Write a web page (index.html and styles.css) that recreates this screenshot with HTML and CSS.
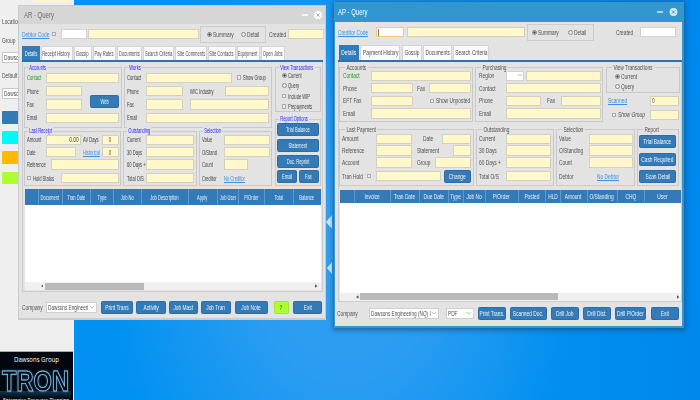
FILE: index.html
```html
<!DOCTYPE html>
<html lang="en">
<head>
<meta charset="utf-8">
<title>Accounts Query</title>
<link rel="stylesheet" href="styles.css">
</head>
<body>
<div class="desktop">
  <svg class="rays" viewBox="0 0 700 400"><path d="M326 222l6-7v14zM327 268l5-6v12z"/></svg>
  <aside class="side">
    <div class="side-top"></div>
    <div class="side-label loc"><b>Location</b></div>
    <div class="side-label grp"><b>Group</b></div>
    <div class="side-box"><b>Dawsons</b></div>
    <div class="side-label def"><b>Default</b></div>
    <div class="side-box"><b>Dawsons</b></div>
    <div class="side-btns"><i class="blue"></i><i class="cyan"></i><i class="orange"></i><i class="lime"></i></div>
    <div class="tron">
      <svg viewBox="0 0 73 49" width="73" height="49">
        <defs><linearGradient id="fade" x1="0" y1="0" x2="0" y2="1"><stop offset="0" stop-color="#2f7fae"/><stop offset="1" stop-color="#02060e"/></linearGradient></defs>
        <rect x="0" y="39" width="71" height="8" fill="url(#fade)" opacity=".4"/>
        <text x="14" y="10" class="tron-name" textLength="45" lengthAdjust="spacingAndGlyphs">Dawsons Group</text>
        <text x="2" y="38.5" class="tron-logo" textLength="67" lengthAdjust="spacingAndGlyphs">TRON</text>
        <text x="3" y="50" class="tron-sub" textLength="66" lengthAdjust="spacingAndGlyphs">Enterprise Resource Planning</text>
      </svg>
    </div>
  </aside>

  <section class="win ar">
    <header class="title"><b>AR - Query</b>
      <svg class="ctl" viewBox="0 0 24 12"><path d="M3 6h6" stroke="#fff" stroke-width="1.6"/><circle cx="19" cy="6" r="3.9" fill="#fff"/><path d="M17.4 4.4l3.2 3.2M20.6 4.4l-3.2 3.2" stroke="#aaa"/></svg>
    </header>
    <div class="top">
      <div class="lab link w30"><b>Debtor Code</b></div><i class="chk"></i>
      <i class="f white w26 m3"></i><i class="f w110 m1"></i>
      <div class="frame"><i class="rad on"></i><div class="lab w28"><b>Summary</b></div><i class="rad"></i><div class="lab"><b>Detail</b></div></div>
      <div class="lab w19 m3"><b>Created</b></div><i class="f w36"></i>
    </div>
    <nav class="tabs">
      <div class="tab on"><b>Details</b></div><div class="tab"><b>Receipt History</b></div><div class="tab"><b>Gossip</b></div><div class="tab"><b>Pay Rates</b></div><div class="tab"><b>Documents</b></div><div class="tab"><b>Search Criteria</b></div><div class="tab"><b>Site Comments</b></div><div class="tab"><b>Site Contacts</b></div><div class="tab"><b>Equipment</b></div><div class="tab"><b>Open Jobs</b></div>
    </nav>
    <div class="panel">
      <div class="groups">
        <div class="left">
          <div class="line upper">
            <fieldset class="box accounts"><div class="legend"><b>Accounts</b></div>
              <div class="row"><div class="lab green"><b>Contact</b></div><i class="f w73"></i></div>
              <div class="row"><div class="lab"><b>Phone</b></div><i class="f w36"></i></div>
              <div class="row"><div class="lab"><b>Fax</b></div><i class="f w36"></i><div class="btn web"><b>Web</b></div></div>
              <div class="row"><div class="lab"><b>Email</b></div><i class="f w73"></i></div>
            </fieldset>
            <fieldset class="box works"><div class="legend"><b>Works</b></div>
              <div class="row"><div class="lab"><b>Contact</b></div><i class="f w86"></i><i class="chk m5"></i><div class="lab"><b>Show Group</b></div></div>
              <div class="row"><div class="lab"><b>Phone</b></div><i class="f w37"></i><div class="lab w35 m7"><b>W/C Industry</b></div><i class="f fill"></i></div>
              <div class="row"><div class="lab"><b>Fax</b></div><i class="f w37"></i><i class="f fill m7"></i></div>
              <div class="row"><div class="lab"><b>Email</b></div><i class="f fill"></i></div>
            </fieldset>
          </div>
          <div class="line lower">
            <fieldset class="box receipt"><div class="legend"><b>Last Receipt</b></div>
              <div class="row"><div class="lab"><b>Amount</b></div><i class="f w35 right"><b>0.00</b></i><div class="lab w19 m2"><b>AV Days</b></div><i class="f fill mid"><b>0</b></i></div>
              <div class="row"><div class="lab"><b>Date</b></div><i class="f w30"></i><div class="lab link w19 m7"><b>Historical</b></div><i class="f fill mid"><b>0</b></i></div>
              <div class="row"><div class="lab w24"><b>Reference</b></div><i class="f fill"></i></div>
              <div class="row hold"><i class="chk"></i><div class="lab w28"><b>Hold Status</b></div><i class="f fill"></i></div>
            </fieldset>
            <fieldset class="box outst"><div class="legend"><b>Outstanding</b></div>
              <div class="row"><div class="lab"><b>Current</b></div><i class="f fill"></i></div>
              <div class="row"><div class="lab"><b>30 Days</b></div><i class="f fill"></i></div>
              <div class="row"><div class="lab"><b>60 Days +</b></div><i class="f fill"></i></div>
              <div class="row hold"><div class="lab"><b>Total O/S</b></div><i class="f fill"></i></div>
            </fieldset>
            <fieldset class="box selec"><div class="legend"><b>Selection</b></div>
              <div class="row"><div class="lab"><b>Value</b></div><i class="f fill"></i></div>
              <div class="row"><div class="lab"><b>O/Stand</b></div><i class="f fill"></i></div>
              <div class="row"><div class="lab"><b>Count</b></div><i class="f w24"></i></div>
              <div class="row hold"><div class="lab"><b>Creditor</b></div><div class="lab link"><b>No Creditor</b></div></div>
            </fieldset>
          </div>
        </div>
        <div class="right-col">
          <fieldset class="box view"><div class="legend"><b>View Transactions</b></div>
            <div class="opt"><i class="rad on"></i><div class="lab"><b>Current</b></div></div>
            <div class="opt"><i class="rad"></i><div class="lab"><b>Query</b></div></div>
            <div class="opt"><i class="chk"></i><div class="lab"><b>Include WIP</b></div></div>
            <div class="opt"><i class="chk"></i><div class="lab"><b>Prepayments</b></div></div>
          </fieldset>
          <fieldset class="box report"><div class="legend"><b>Report Options</b></div>
            <div class="btn"><b>Trial Balance</b></div><div class="btn"><b>Statement</b></div><div class="btn"><b>Doc. Reprint</b></div>
            <div class="pair"><div class="btn"><b>Email</b></div><div class="btn"><b>Fax</b></div></div>
          </fieldset>
        </div>
      </div>
      <div class="grid">
        <div class="head"><span></span><span><b>Document</b></span><span><b>Tran Date</b></span><span><b>Type</b></span><span><b>Job No</b></span><span><b>Job Description</b></span><span><b>Apply</b></span><span><b>Job User</b></span><span><b>P/Order</b></span><span><b>Total</b></span><span><b>Balance</b></span></div>
        <div class="rows"></div>
        <div class="scroll"><svg viewBox="0 0 3 4"><path d="M3 0v4L0 2z"/></svg><i class="thumb"></i><svg class="end" viewBox="0 0 3 4"><path d="M0 0v4l3-2z"/></svg></div>
      </div>
    </div>
    <footer class="foot">
      <div class="lab"><b>Company</b></div>
      <div class="sel"><b>Dawsons Engineeri</b><svg viewBox="0 0 4 3"><path d="M0 0l2 2 2-2"/></svg></div>
      <div class="btn b1"><b>Print Trans</b></div><div class="btn b2"><b>Activity</b></div><div class="btn b3"><b>Job Mast</b></div><div class="btn b4"><b>Job Tran</b></div><div class="btn b5"><b>Job Note</b></div><div class="btn help"><b>?</b></div><div class="btn b6"><b>Exit</b></div>
    </footer>
  </section>

  <section class="win ap">
    <header class="title"><b>AP - Query</b>
      <svg class="ctl" viewBox="0 0 24 12"><path d="M1 6h6" stroke="#cfe8f6" stroke-width="1.6"/><circle cx="17.5" cy="6" r="3.9" fill="#d8ecf8"/><path d="M15.9 4.4l3.2 3.2M19.1 4.4l-3.2 3.2" stroke="#3f8fc0"/></svg>
    </header>
    <div class="top">
      <div class="lab link w38"><b>Creditor Code</b></div>
      <i class="f white focus w28"></i><i class="f w118 m3"></i>
      <div class="frame"><i class="rad on"></i><div class="lab w30"><b>Summary</b></div><i class="rad"></i><div class="lab"><b>Detail</b></div></div>
      <div class="lab w24 m22"><b>Created</b></div><i class="f white w36"></i>
    </div>
    <nav class="tabs">
      <div class="tab on"><b>Details</b></div><div class="tab"><b>Payment History</b></div><div class="tab"><b>Gossip</b></div><div class="tab"><b>Documents</b></div><div class="tab"><b>Search Criteria</b></div>
    </nav>
    <div class="panel">
      <div class="line upper">
        <fieldset class="box accounts"><div class="legend"><b>Accounts</b></div>
          <div class="row"><div class="lab green"><b>Contact</b></div><i class="f fill"></i></div>
          <div class="row"><div class="lab"><b>Phone</b></div><i class="f w41"></i><div class="lab w12 m4"><b>Fax</b></div><i class="f fill"></i></div>
          <div class="row"><div class="lab"><b>EFT Fax</b></div><i class="f w41"></i><i class="chk m17"></i><div class="lab"><b>Show Unposted</b></div></div>
          <div class="row"><div class="lab"><b>Email</b></div><i class="f fill"></i></div>
        </fieldset>
        <fieldset class="box purch"><div class="legend"><b>Purchasing</b></div>
          <div class="row"><div class="lab"><b>Region</b></div><i class="f white w18 drop"><svg viewBox="0 0 4 3"><path d="M0 0l2 2 2-2"/></svg></i><i class="f fill m2"></i></div>
          <div class="row"><div class="lab"><b>Contact</b></div><i class="f fill"></i></div>
          <div class="row"><div class="lab"><b>Phone</b></div><i class="f w35"></i><div class="lab w14 m6"><b>Fax</b></div><i class="f fill"></i></div>
          <div class="row"><div class="lab"><b>Email</b></div><i class="f fill"></i></div>
        </fieldset>
        <div class="right-col">
          <fieldset class="box view"><div class="legend"><b>View Transactions</b></div>
            <div class="opt"><i class="rad on"></i><div class="lab"><b>Current</b></div></div>
            <div class="opt"><i class="rad"></i><div class="lab"><b>Query</b></div></div>
          </fieldset>
          <div class="row scan"><div class="lab link"><b>Scanned</b></div><i class="f fill"><b>0</b></i></div>
          <div class="row show"><i class="chk m4"></i><div class="lab it"><b>Show Group</b></div><i class="f fill"></i></div>
        </div>
      </div>
      <div class="line lower">
        <fieldset class="box payment"><div class="legend"><b>Last Payment</b></div>
          <div class="row"><div class="lab"><b>Amount</b></div><i class="f w36"></i><div class="lab w19 m11"><b>Date</b></div><i class="f fill"></i></div>
          <div class="row"><div class="lab"><b>Reference</b></div><i class="f w36"></i><div class="lab w36 m5"><b>Statement</b></div><i class="f fill"></i></div>
          <div class="row"><div class="lab"><b>Account</b></div><i class="f w36"></i><div class="lab w18 m5"><b>Group</b></div><i class="f fill"></i></div>
          <div class="row hold"><div class="lab w25"><b>Tran Hold</b></div><i class="chk"></i><i class="f w65 m3"></i><div class="btn change"><b>Change</b></div></div>
        </fieldset>
        <fieldset class="box outst"><div class="legend"><b>Outstanding</b></div>
          <div class="row"><div class="lab"><b>Current</b></div><i class="f fill"></i></div>
          <div class="row"><div class="lab"><b>30 Days</b></div><i class="f fill"></i></div>
          <div class="row"><div class="lab"><b>60 Days +</b></div><i class="f fill"></i></div>
          <div class="row hold"><div class="lab"><b>Total O/S</b></div><i class="f fill"></i></div>
        </fieldset>
        <fieldset class="box selec"><div class="legend"><b>Selection</b></div>
          <div class="row"><div class="lab"><b>Value</b></div><i class="f fill"></i></div>
          <div class="row"><div class="lab"><b>O/Standing</b></div><i class="f fill"></i></div>
          <div class="row"><div class="lab"><b>Count</b></div><i class="f fill"></i></div>
          <div class="row hold"><div class="lab w38"><b>Debtor</b></div><div class="lab link"><b>No Debtor</b></div></div>
        </fieldset>
        <fieldset class="box report"><div class="legend"><b>Report</b></div>
          <div class="btn"><b>Trial Balance</b></div><div class="btn"><b>Cash Required</b></div><div class="btn"><b>Scan Detail</b></div>
        </fieldset>
      </div>
      <div class="grid">
        <div class="head"><span></span><span><b>Invoice</b></span><span><b>Tran Date</b></span><span><b>Due Date</b></span><span><b>Type</b></span><span><b>Job No</b></span><span><b>P/Order</b></span><span><b>Posted</b></span><span><b>HLD</b></span><span><b>Amount</b></span><span><b>O/Standing</b></span><span><b>CHQ</b></span><span><b>User</b></span></div>
        <div class="rows"></div>
        <div class="scroll"><svg viewBox="0 0 3 4"><path d="M3 0v4L0 2z"/></svg><i class="thumb"></i><svg class="end" viewBox="0 0 3 4"><path d="M0 0v4l3-2z"/></svg></div>
      </div>
    </div>
    <footer class="foot">
      <div class="lab"><b>Company</b></div>
      <div class="sel"><b>Dawsons Engineering (NQ) I</b><svg viewBox="0 0 4 3"><path d="M0 0l2 2 2-2"/></svg></div>
      <div class="sel pdf"><b>PDF</b><svg viewBox="0 0 4 3"><path d="M0 0l2 2 2-2"/></svg></div>
      <div class="btn b1"><b>Print Trans.</b></div><div class="btn b2"><b>Scanned Doc.</b></div><div class="btn b3"><b>Drill Job</b></div><div class="btn b4"><b>Drill Dist.</b></div><div class="btn b5"><b>Drill P/Order</b></div><div class="btn b6"><b>Exit</b></div>
    </footer>
  </section>
</div>
</body>
</html>
```
FILE: styles.css
```css
* { box-sizing: border-box; }
body { margin: 0; font-family: "Liberation Sans", Arial, sans-serif; }
.desktop {
  position: relative; width: 700px; height: 400px; overflow: hidden; color: #505050;
  background: radial-gradient(ellipse 240px 330px at 345px 250px, #34a0f2 0%, #2a9cf1 40%, #0091f2 100%);
  --size: 7px; --squeeze: .69;
}
.desktop::before {
  content: ""; position: absolute; inset: 0;
  background: linear-gradient(90deg, transparent 70%, rgba(0,120,225,.35) 100%);
}
.rays { position: absolute; inset: 0; fill: #d6ebfb; }

/* Condensed text: the inner <b> is squeezed horizontally */
b {
  display: block; flex: none; font-weight: normal; font-style: normal; white-space: nowrap;
  font-size: var(--size); line-height: 9px;
  transform: scaleX(var(--squeeze)); transform-origin: 0 50%;
}
i { display: block; font-style: normal; }

/* Left application panel */
.side { position: relative; display: flex; flex-direction: column; width: 73.5px; height: 400px; background: #efefef; }
.side-top { width: 36px; height: 1.5px; margin-left: 33px; background: #fbf5cd; flex: none; }
.side-label { padding-left: 2px; height: 9px; flex: none; }
.loc { margin-top: 15px; }
.grp { margin-top: 10.5px; }
.def { margin-top: 8.5px; }
.side-box { flex: none; height: 10.5px; margin: 7px 0 0 2px; border: 1px solid #c8c8c8; background: #fff; padding-left: 1px; }
.def + .side-box { margin-top: 8px; }
.side-btns { display: flex; flex-direction: column; gap: 7.5px; margin: 12.5px 0 0 2px; width: 40px; }
.side-btns i { height: 12.7px; border-radius: 1px; }
.blue { background: #337ab7; }
.cyan { background: #00f9ff; }
.orange { background: #ffb900; }
.lime { background: #adff2f; }
.tron { position: relative; margin-top: auto; height: 49px; background: #02060e; border-top: 1px solid #aaa; overflow: hidden; width: 72.5px; }
.tron svg { display: block; }
.tron-name { font: 7.5px "Open Sans", sans-serif; fill: #fff; }
.tron-logo { font: bold 30px "Liberation Sans", sans-serif; fill: #030a14; stroke: #8fc8ea; stroke-width: .9; filter: drop-shadow(0 0 1px #1c6fa5); }
.tron-sub { font: 6px "Open Sans", sans-serif; fill: #fff; }

/* Windows */
.win { position: absolute; display: flex; flex-direction: column; background: #e3e3e3; }
.ar { left: 18px; top: 5px; width: 308px; height: 315px; border: 1px solid #cbcbcb; border-width: 1px 1px 2px; }
.ap { left: 334px; top: 2px; width: 350px; height: 326px; border: solid #3296cf; border-width: 1px 2px 2px 1px; box-shadow: 0 1px 5px 1px rgba(30,70,110,.7); }
.title { display: flex; align-items: center; justify-content: space-between; flex: none; }
.title b { font-size: 8.2px; --squeeze: .73; }
.ar .title { height: 18px; background: #d6d6d6; padding-left: 5px; color: #6a6a6a; }
.ap .title { height: 18.5px; background: #3296cf; padding-left: 3px; color: #fff; }
.ctl { width: 24px; height: 12px; margin-right: 2px; fill: none; }

.top { display: flex; align-items: center; flex: none; }
.ar .top { height: 22px; padding: 0 0 2px 3px; }
.ap .top { height: 23.5px; padding: 0 0 2px 3px; }
.lab { flex: none; height: 9px; }
.link { color: #3d8fdc; }
.link b { text-decoration: underline; }
.green { color: #1f9a1f; }
.it b { font-style: italic; }
.f { flex: none; height: 10.3px; background: #fef8cb; border: 1px solid #d3d0bd; display: flex; align-items: center; padding: 0 1px; }
.f.white { background: #fff; border-color: #d2d2d2; }
.f.focus { border-color: #f4c877; }
.f.focus::before { content: ""; height: 7px; border-left: 1px solid #777; }
.f.fill { flex: 1 1 0; }
.f.right { justify-content: flex-end; }
.f.right b { transform-origin: 100% 50%; --squeeze: .75; }
.f.mid { justify-content: center; }
.f.mid b { transform-origin: 50% 50%; }
.drop { justify-content: flex-end; }
.drop svg, .sel svg { width: 4px; height: 3px; fill: none; stroke: #999; stroke-width: .6; margin-left: auto; flex: none; }
.chk { flex: none; width: 4px; height: 4.5px; border: 1px solid #aaa; background: #eee; margin-right: 2px; }
.rad { flex: none; width: 5px; height: 5px; border: 1px solid #888; border-radius: 50%; background: #eee; margin-right: 1px; }
.rad.on { background: radial-gradient(circle, #444 40%, #ddd 60%); }
.frame { display: flex; align-items: center; flex: none; border: 1px solid #ccc; }
.ar .frame { width: 66px; height: 17px; margin-left: 1.5px; padding-left: 6px; }
.ap .frame { width: 67px; height: 17.5px; margin-left: 2px; padding-left: 4px; }

.tabs { display: flex; flex: none; height: 16px; border-bottom: 2px solid #2a72b5; gap: 1px; margin: 0 2px 0 3px; }
.tab { display: flex; align-items: center; justify-content: center; background: #fbfbfb; border: 1px solid #d4d4d4; border-bottom: 0; overflow: hidden; }
.tab.on { background: #337ab7; border-color: #337ab7; color: #fff; }
.tab b, .btn b, .head b { transform-origin: 50% 50%; }
.ar .tabs { --size: 6.5px; --squeeze: .63; }
.ar .tab:nth-child(1) { width: 17.5px; }
.ar .tab:nth-child(2) { width: 32px; }
.ar .tab:nth-child(3) { width: 18px; }
.ar .tab:nth-child(4) { width: 23px; }
.ar .tab:nth-child(5) { width: 25.5px; }
.ar .tab:nth-child(6) { width: 31px; }
.ar .tab:nth-child(7) { width: 31.5px; }
.ar .tab:nth-child(8) { width: 28px; }
.ar .tab:nth-child(9) { width: 23px; }
.ar .tab:nth-child(10) { width: 24px; }
.ap .tabs { height: 16.5px; gap: 1.3px; padding-left: 1px; margin: 0 0 0 3px; }
.ap .tab:nth-child(1) { width: 20px; }
.ap .tab:nth-child(2) { width: 40px; }
.ap .tab:nth-child(3) { width: 20px; }
.ap .tab:nth-child(4) { width: 29px; }
.ap .tab:nth-child(5) { width: 36px; }

.panel { display: flex; flex-direction: column; flex: none; border: 1px solid #cdcdcd; border-top: 0; }
.ar .panel { --size: 6.5px; --squeeze: .63; height: 230px; margin: 0 2px 0 3px; padding: 5px 1px 0; color: #404040; }
.ap .panel { height: 240px; margin: 0 0 0 3px; padding: 5.5px 0 0; }
.line { display: flex; }
.box { position: relative; min-width: 0; margin: 0; border: 1px solid #c9c9c9; padding: 4.5px 0 0; display: flex; flex-direction: column; flex: none; }
.legend { position: absolute; top: -5.5px; left: 5px; height: 9px; }
.legend b { background: #e3e3e3; padding: 0 2px; }
.ar .legend { color: #2626ff; }
.row { display: flex; align-items: center; height: 10.3px; }
.row > .lab:first-child { width: var(--lab); }
.row > .lab:first-child.w24 { width: 24px; }
.row > .lab:first-child.w25 { width: 25px; }
.row > .lab:first-child.w38 { width: 38px; }

.btn { display: flex; align-items: center; justify-content: center; flex: none; height: 13px; background: #337ab7; border: 1px solid #2e6da4; border-radius: 1.5px; color: #eef5fb; }

/* AR groups */
.groups { display: flex; justify-content: space-between; height: 122px; }
.left { width: 248px; }
.ar .upper { height: 63.5px; gap: 2px; }
.ar .upper .box { height: 60.5px; gap: 3.1px; }
.ar .lower { gap: 2px; }
.ar .lower .box { height: 55.5px; gap: 2.2px; padding-top: 3px; }
.ar .hold { margin-top: 1px; }
.ar .accounts { --lab: 19.5px; width: 98px; padding-left: 1.5px; }
.web { width: 29px; height: 13.5px; margin: 0 0 6px 8px; align-self: center; }
.ar .works { --lab: 19px; width: 148px; padding: 4.5px 2px 0 1.5px; }
.ar .receipt { --lab: 19px; width: 97px; padding: 3px 1.5px 0 1.5px; }
.ar .outst { --lab: 19px; width: 73.5px; padding: 3px 1.5px 0 2.5px; }
.ar .selec { --lab: 22px; width: 73.5px; padding: 3px 1.5px 0 2px; }
.right-col { display: flex; flex-direction: column; }
.ar .right-col { width: 46.5px; justify-content: space-between; height: 118.5px; }
.opt { display: flex; align-items: center; }
.ar .view { height: 45px; padding: 3px 0 0 6px; gap: 1px; }
.ar .view .chk { margin: 0 2px 0 0; }
.ar .view .opt { height: 9.3px; }
.ar .report { height: 67px; padding: 3.5px 1px 0; gap: 2.8px; }
.ar .legend { left: 3px; }
.pair { display: flex; justify-content: space-between; }
.pair .btn { width: 20.5px; }

/* AP groups */
.ap .upper { gap: 2.5px; height: 62px; }
.ap .upper > .box { height: 54.5px; gap: 2.3px; padding-top: 2.5px; }
.ap .accounts { --lab: 28.5px; width: 133.5px; padding-right: 1px; padding-left: 2.5px; }
.ap .purch { --lab: 27px; width: 128px; padding-left: 3px; padding-right: 1px; }
.ap .right-col { width: 74px; --lab: 42px; }
.ap .view { height: 26px; padding: 3.5px 0 0 8px; }
.ap .view .opt { height: 9.7px; }
.scan { margin: 2.5px 1px 0 2px; }
.show { margin: 4px 1px 0 2px; }
.show .lab { width: 32px; }
.ap .lower { gap: 2px; height: 60.5px; }
.ap .lower .box { height: 57px; gap: 1.7px; padding-top: 3.5px; }
.ap .lower .hold { margin-top: 1.5px; }
.ap .payment { --lab: 34px; width: 134.5px; padding-left: 2px; padding-right: 2px; }
.change { width: 27.5px; margin: 1px 0 0 3px; }
.ap .outst { --lab: 27px; width: 78.5px; padding: 0 2px; }
.ap .selec { --lab: 30px; width: 79px; padding: 0 1.5px; }
.ap .lower .report { width: 41.5px; gap: 4.5px; padding: 5px 1.5px 0 1px; }

/* Result grids */
.grid { display: flex; flex-direction: column; background: #fff; }
.head { display: grid; background: #337ab7; color: #e8f1f9; flex: none; }
.head span { display: flex; align-items: center; justify-content: center; border-right: 1px solid #5f9aca; overflow: hidden; }
.head span:last-child { border-right: 0; }
.ar .grid { height: 101px; margin: 0 .5px; }
.ar .head { height: 16px; grid-template-columns: 14px 24px 28.5px 22.5px 28px 47px 29px 21px 26px 29px 1fr; }
.ap .grid { height: 111px; margin: 0 0 0 1px; }
.ap .head { height: 13px; grid-template-columns: 14.5px 36px 29px 29.5px 14.5px 22px 33px 27px 15px 27px 30px 27px 1fr; }
.rows { flex: 1; }
.scroll { display: flex; align-items: center; height: 8px; background: #f0f0f0; fill: #555; }
.scroll svg { width: 2.5px; height: 4px; }
.thumb { height: 7px; background: #b9b9b9; }
.ar .scroll { padding: 0 3px 0 16px; }
.ar .thumb { width: 99px; margin-left: 2px; }
.ap .scroll { padding: 0 2px 0 16px; }
.ap .thumb { width: 197.5px; margin-left: 1.5px; }
.scroll .end { margin-left: auto; }

/* Footers */
.foot { display: flex; align-items: center; flex: 1; }
.ar .foot { padding: 4px 0 0 3px; }
.ap .foot { padding: 0 0 1px 2px; }
.sel { display: flex; align-items: center; justify-content: space-between; flex: none; height: 11px; background: #fff; border: 1px solid #cfcfcf; padding: 0 2px 0 1px; }
.sel b { width: 0; min-width: max-content; margin-right: -40px; }
.sel.pdf b { margin-right: -8px; }
.ar .foot .lab { width: 23.5px; }
.ar .sel { width: 51.5px; margin-right: 4px; }
.ar .sel b { --squeeze: .67; }
.ar .b1 { width: 32px; margin-right: 3px; }
.ar .b2 { width: 30px; margin-right: 3px; }
.ar .b3 { width: 29px; margin-right: 3px; }
.ar .b4 { width: 30px; margin-right: 4px; }
.ar .b5 { width: 33px; margin-right: 6px; }
.ar .help { width: 14.5px; margin-right: 4.5px; background: #adff2f; border-color: #9ce62c; color: #333; }
.ar .b6 { width: 29px; }
.ap .foot .lab { width: 31.5px; }
.ap .sel { width: 70.5px; margin-right: 6.5px; }
.ap .sel b { --squeeze: .67; }
.ap .sel.pdf { width: 28.5px; margin-right: 4px; }
.ap .b1 { width: 27.5px; margin-right: 4.5px; }
.ap .b2 { width: 36.5px; margin-right: 4.5px; }
.ap .b3 { width: 27.5px; margin-right: 4.5px; }
.ap .b4 { width: 27.5px; margin-right: 4px; }
.ap .b5 { width: 31.5px; margin-right: 5px; }
.ap .b6 { width: 27.5px; }

/* Spacing and width steps */
.m1 { margin-left: 1px; } .m2 { margin-left: 2px; } .m3 { margin-left: 3px; } .m4 { margin-left: 4px; }
.m5 { margin-left: 5px; } .m6 { margin-left: 6px; } .m7 { margin-left: 7px; } .m11 { margin-left: 11px; }
.m17 { margin-left: 17px; } .m22 { margin-left: 22px; }
.w12 { width: 12px; } .w14 { width: 13.5px; } .w18 { width: 18px; } .w19 { width: 19px; } .w24 { width: 24px; }
.w25 { width: 25px; } .w26 { width: 26px; } .w28 { width: 28px; } .w30 { width: 30px; } .w35 { width: 35px; }
.w36 { width: 36px; } .w37 { width: 37px; } .w38 { width: 38px; } .w41 { width: 41.5px; } .w65 { width: 64.5px; }
.w73 { width: 73px; } .w86 { width: 86.5px; } .w110 { width: 110.5px; } .w118 { width: 118px; }
```
